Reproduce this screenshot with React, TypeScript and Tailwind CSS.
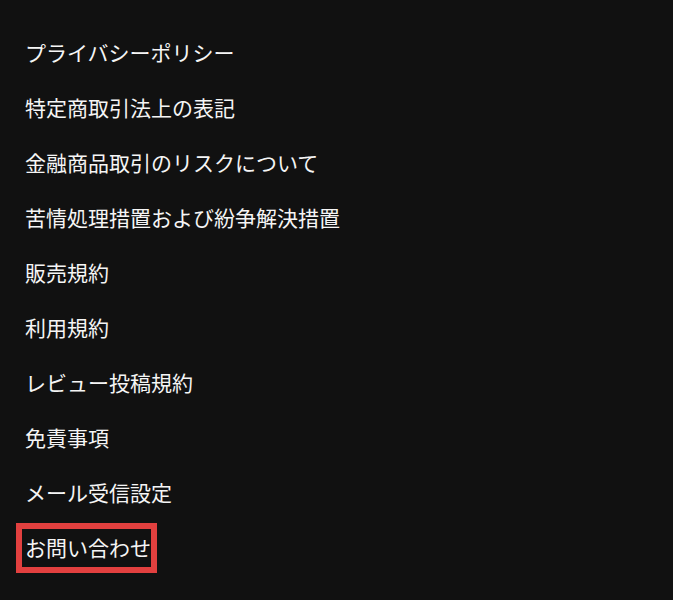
import React from "react";

const items = [
  "プライバシーポリシー",
  "特定商取引法上の表記",
  "金融商品取引のリスクについて",
  "苦情処理措置および紛争解決措置",
  "販売規約",
  "利用規約",
  "レビュー投稿規約",
  "免責事項",
  "メール受信設定",
];

export default function App() {
  return (
    <div
      className="w-[673px] h-[600px] bg-[#111111] text-[#f5f5f5] overflow-hidden pt-[25px] pl-[25px]"
      style={{ fontFamily: '"Noto Sans CJK JP", "Noto Sans", sans-serif' }}
    >
      {items.map((t) => (
        <div key={t} className="h-[55px] flex items-center text-[21px] leading-none">
          {t}
        </div>
      ))}
      <div className="h-[55px] flex items-center text-[21px] leading-none">
        <span className="-ml-[9px] pl-[3px] pr-0 h-[50px] flex items-center border-[6px] border-[#e2403f]">
          お問い合わせ
        </span>
      </div>
    </div>
  );
}
